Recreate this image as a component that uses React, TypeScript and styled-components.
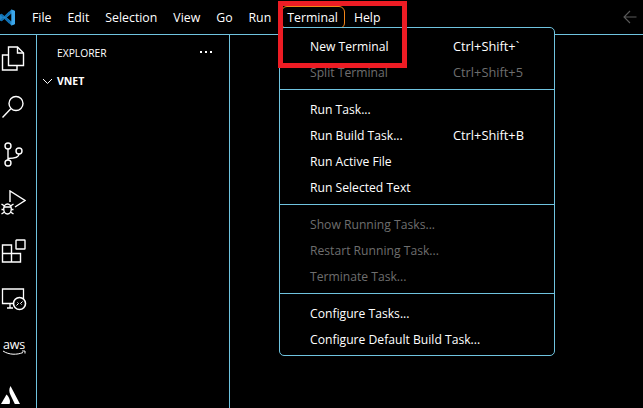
import React from 'react';
import styled, { createGlobalStyle } from 'styled-components';

const borderColor = '#6fc3df';

const GlobalStyle = createGlobalStyle`
  html, body {
    margin: 0;
    padding: 0;
    background: #000;
  }
  body {
    font-family: "Open Sans", "Liberation Sans", sans-serif;
    overflow: hidden;
  }
`;

const Page = styled.div`
  position: relative;
  width: 643px;
  height: 408px;
  background: #000;
  color: #fff;
  overflow: hidden;
`;

const TitleBar = styled.div`
  display: flex;
  align-items: center;
  height: 34px;
  border-bottom: 1px solid ${borderColor};
`;

const Logo = styled.div`
  width: 27px;
  height: 34px;
  display: flex;
  align-items: center;
`;

const MenuBarItem = styled.div<{ $active?: boolean }>`
  height: 21px;
  line-height: 21px;
  margin-top: 1px;
  margin-right: 5px;
  padding: 0 6px 0 5px;
  font-size: 12.3px;
  color: #fff;
  border-radius: 5px;
  box-sizing: border-box;
  outline: ${p => (p.$active ? '1px solid #f38518' : 'none')};
`;

const BackArrow = styled.div`
  margin-left: auto;
  margin-right: 6px;
  display: flex;
  align-items: center;
`;

const Body = styled.div`
  display: flex;
  height: 373px;
`;

const ActivityBar = styled.div`
  width: 36px;
  border-right: 1px solid ${borderColor};
  display: flex;
  flex-direction: column;
  align-items: flex-start;
  flex-shrink: 0;
`;

const ActivityIcon = styled.div`
  height: 48px;
  flex-shrink: 0;
  display: flex;
  align-items: center;
  padding-left: 1px;
`;

const SideBar = styled.div`
  width: 192px;
  border-right: 1px solid ${borderColor};
  flex-shrink: 0;
`;

const SideHeader = styled.div`
  display: flex;
  align-items: center;
  justify-content: space-between;
  height: 36px;
  padding: 0 17px 0 20px;
  font-size: 10.3px;
  color: #fff;
`;

const Dots = styled.div`
  display: flex;
  gap: 3px;
  margin-top: -2px;
`;

const Dot = styled.span`
  width: 2px;
  height: 2px;
  background: #fff;
`;

const FolderRow = styled.div`
  display: flex;
  align-items: center;
  gap: 4px;
  height: 20px;
  padding-left: 5px;
  font-size: 10.5px;
  font-weight: 700;
`;

const Dropdown = styled.div`
  position: absolute;
  left: 279px;
  top: 27px;
  box-sizing: border-box;
  width: 276px;
  height: 329px;
  padding-top: 5px;
  border: 1px solid ${borderColor};
  border-radius: 5px;
  background: #000;
`;

const Row = styled.div<{ $disabled?: boolean }>`
  display: flex;
  height: 26px;
  align-items: center;
  padding-left: 30px;
  font-size: 12.15px;
  color: ${p => (p.$disabled ? '#6e6e6e' : '#fff')};
`;

const RowLabel = styled.span`
  flex: 1;
`;

const Keys = styled.span`
  width: 101px;
  font-size: 12.8px;
`;

const Divider = styled.div`
  height: 1px;
  margin: 4px 0 6px;
  background: ${borderColor};
`;

const Annotation = styled.div`
  position: absolute;
  left: 278px;
  top: 1px;
  width: 129px;
  height: 67px;
  box-sizing: border-box;
  border: 5px solid #ed1c24;
  pointer-events: none;
`;

const AwsMark = styled.div`
  display: flex;
  flex-direction: column;
  align-items: center;
  width: 26px;
  font-size: 12.5px;
  line-height: 11px;
  letter-spacing: -0.2px;
  color: #fff;
`;

const VsCodeLogo = () => (
  <svg width="17" height="17" viewBox="0 0 17 17">
    <path d="M11.5 0.5 L15 2 V15 L11.5 16.5 L4.5 9.8 L1.5 12.2 L0 11.3 V5.7 L1.5 4.8 L4.5 7.2 Z" fill="#2489ca" />
    <path d="M11.5 4.6 L6.7 8.5 L11.5 12.4 Z" fill="#000" />
    <path d="M0 5.7 L1.5 4.8 L11 12.7 L9 14.5 Z M0 11.3 L1.5 12.2 L11 4.3 L9 2.5 Z" fill="#1070b3" />
    <path d="M11.5 0.5 L15 2 V15 L11.5 16.5 Z" fill="#3ca6ea" />
  </svg>
);

const ArrowIcon = () => (
  <svg width="14" height="14" viewBox="0 0 14 14" fill="none" stroke="#5a5a5a" strokeWidth="1.1">
    <path d="M13.5 7H1M7 1L1 7l6 6" />
  </svg>
);

const FilesIcon = () => (
  <svg width="24" height="26" viewBox="0 0 24 26" fill="none" stroke="#fff" strokeWidth="1.4">
    <path d="M7.5 6.5V1h9l6 6v12.5H7.5z" />
    <path d="M16.5 1v6h6" />
    <path d="M7.5 9H1.5v15h14.5v-4.5" />
  </svg>
);

const SearchIcon = () => (
  <svg width="24" height="26" viewBox="0 0 24 26" fill="none" stroke="#fff" strokeWidth="1.4">
    <circle cx="15" cy="9.5" r="7" />
    <path d="M9.8 14.7L1.5 23.5" />
  </svg>
);

const BranchIcon = () => (
  <svg width="24" height="26" viewBox="0 0 24 26" fill="none" stroke="#fff" strokeWidth="1.4">
    <circle cx="7" cy="4" r="3" />
    <circle cx="7" cy="21" r="3" />
    <circle cx="18" cy="9" r="3" />
    <path d="M7 7v11M7 16.5c6 0 11-1 11-4.5" />
  </svg>
);

const DebugIcon = () => (
  <svg width="25" height="27" viewBox="0 0 25 27" fill="none" stroke="#fff" strokeWidth="1.4">
    <path d="M9 12V1l15 9.5-10 6.5" />
    <ellipse cx="6.5" cy="19" rx="3.8" ry="5" />
    <path d="M3 17h7M0.5 14l3 2M12.5 14l-3 2M0.5 24l3-2M12.5 24l-3-2M0.5 19.5h2M10.5 19.5h2" />
  </svg>
);

const ExtensionsIcon = () => (
  <svg width="25" height="25" viewBox="0 0 25 25" fill="none" stroke="#fff" strokeWidth="1.4">
    <rect x="15" y="1" width="9" height="9" rx="0.5" />
    <path d="M1.5 6h9v17h-9zM1.5 14.5h18V23h-9M10.5 14.500V6" />
  </svg>
);

const RemoteIcon = () => (
  <svg width="26" height="23" viewBox="0 0 26 23" fill="none" stroke="#fff" strokeWidth="1.3">
    <path d="M12 15.5H1.5V1h21v11" />
    <path d="M6 20h6M9 16v4" />
    <circle cx="18.5" cy="15.5" r="6" fill="#000" stroke="#fff" strokeWidth="1.6" />
    <path d="M15.5 17.5l2-2-1-1M21.500 13.5l-2 2 1 1" stroke="#fff" strokeWidth="1" />
  </svg>
);

const AwsIcon = () => (
  <AwsMark>
    aws
    <svg width="24" height="6" viewBox="0 0 24 6" fill="none" stroke="#fff" strokeWidth="1">
      <path d="M1 1c6 4 14 4 20 1.5M20 1h3v2.5" />
    </svg>
  </AwsMark>
);

const AtlassianIcon = () => (
  <svg width="19" height="18" viewBox="0 0 19 18" fill="#fff">
    <path d="M9.5 0C7.8 3 8 6 9.5 9l4.300 9H19z" />
    <path d="M5.5 8.500L0 18h8.500c1-2.500.5-6-3-9.500z" />
  </svg>
);

const App = () => {
  return (
    <Page>
      <GlobalStyle />
      <TitleBar>
        <Logo>
          <VsCodeLogo />
        </Logo>
        <MenuBarItem>File</MenuBarItem>
        <MenuBarItem>Edit</MenuBarItem>
        <MenuBarItem>Selection</MenuBarItem>
        <MenuBarItem>View</MenuBarItem>
        <MenuBarItem>Go</MenuBarItem>
        <MenuBarItem>Run</MenuBarItem>
        <MenuBarItem $active>Terminal</MenuBarItem>
        <MenuBarItem>Help</MenuBarItem>
        <BackArrow>
          <ArrowIcon />
        </BackArrow>
      </TitleBar>
      <Body>
        <ActivityBar>
          <ActivityIcon><FilesIcon /></ActivityIcon>
          <ActivityIcon><SearchIcon /></ActivityIcon>
          <ActivityIcon><BranchIcon /></ActivityIcon>
          <ActivityIcon><DebugIcon /></ActivityIcon>
          <ActivityIcon><ExtensionsIcon /></ActivityIcon>
          <ActivityIcon><RemoteIcon /></ActivityIcon>
          <ActivityIcon><AwsIcon /></ActivityIcon>
          <ActivityIcon><AtlassianIcon /></ActivityIcon>
        </ActivityBar>
        <SideBar>
          <SideHeader>
            EXPLORER
            <Dots>
              <Dot />
              <Dot />
              <Dot />
            </Dots>
          </SideHeader>
          <FolderRow>
            <svg width="11" height="7" viewBox="0 0 11 7" fill="none" stroke="#fff" strokeWidth="1">
              <path d="M1 1l4.5 4.5L10 1" />
            </svg>
            VNET
          </FolderRow>
        </SideBar>
      </Body>
      <Dropdown>
        <Row><RowLabel>New Terminal</RowLabel><Keys>Ctrl+Shift+`</Keys></Row>
        <Row $disabled><RowLabel>Split Terminal</RowLabel><Keys>Ctrl+Shift+5</Keys></Row>
        <Divider />
        <Row><RowLabel>Run Task...</RowLabel></Row>
        <Row><RowLabel>Run Build Task...</RowLabel><Keys>Ctrl+Shift+B</Keys></Row>
        <Row><RowLabel>Run Active File</RowLabel></Row>
        <Row><RowLabel>Run Selected Text</RowLabel></Row>
        <Divider />
        <Row $disabled><RowLabel>Show Running Tasks...</RowLabel></Row>
        <Row $disabled><RowLabel>Restart Running Task...</RowLabel></Row>
        <Row $disabled><RowLabel>Terminate Task...</RowLabel></Row>
        <Divider />
        <Row><RowLabel>Configure Tasks...</RowLabel></Row>
        <Row><RowLabel>Configure Default Build Task...</RowLabel></Row>
      </Dropdown>
      <Annotation />
    </Page>
  );
};

export default App;
